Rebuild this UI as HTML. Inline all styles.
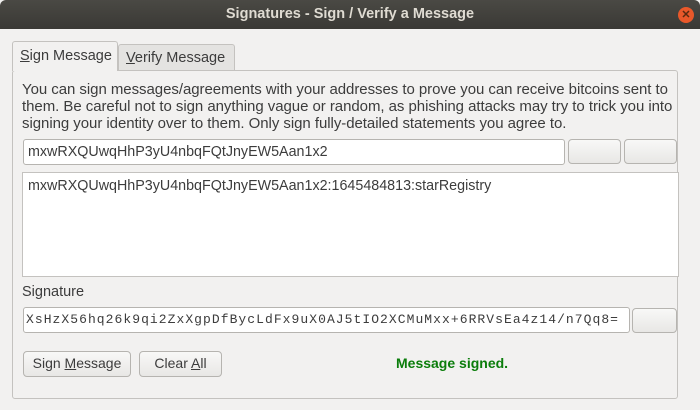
<!DOCTYPE html>
<html><head><style>
*{margin:0;padding:0;box-sizing:border-box}
body{width:700px;height:410px;background:#f2f1f0;font-family:"Liberation Sans",sans-serif;font-size:13.5px;color:#3c3c3c;position:relative;overflow:hidden}
.a{position:absolute}
.title{left:0;top:0;width:700px;height:29px;background:linear-gradient(#4a4944,#3a3935);color:#dfdbd2;font-weight:bold;font-size:14.5px;text-align:center;line-height:29px;border-radius:6px 6px 0 0}
.close{left:678px;top:7px;width:16px;height:16px;border-radius:50%;background:#e9582a;color:#5a2a10;font-size:11px;line-height:16px;text-align:center;font-weight:bold}
.pane{left:12px;top:70px;width:666px;height:329px;border:1px solid #c4c2bf;border-radius:3px;background:#f2f1f0}
.tab{height:29px;border:1px solid #c4c2bf;border-bottom:none;border-radius:3px 3px 0 0;line-height:28px;padding-left:7px;font-size:14px}
.inp{background:#fff;border:1px solid #b6b4b0;border-radius:3px}
.btn{border:1px solid #b6b4b0;border-radius:4px;background:linear-gradient(#f8f8f7,#e8e7e5);text-align:center;line-height:23px;font-size:14px}
u{text-decoration:underline}
.mono{font-family:"Liberation Mono",monospace;font-size:13px;letter-spacing:1.05px}
</style></head><body>
<div class="a title">Signatures - Sign / Verify a Message</div>
<div class="a close">✕</div>
<div class="a pane"></div>
<div class="a tab" style="left:118px;top:44px;width:117px;height:26px;background:#e4e3e1;line-height:26px;font-size:14.5px"><u>V</u>erify Message</div>
<div class="a tab" style="left:12px;top:41px;width:106px;height:30px;background:#f2f1f0;font-size:14.5px"><u>S</u>ign Message</div>
<div class="a" style="left:22px;top:81px;width:670px;line-height:17px;font-size:15px;letter-spacing:-0.05px;white-space:nowrap">You can sign messages/agreements with your addresses to prove you can receive bitcoins sent to<br>them. Be careful not to sign anything vague or random, as phishing attacks may try to trick you into<br>signing your identity over to them. Only sign fully-detailed statements you agree to.</div>
<div class="a inp" style="left:23px;top:139px;width:542px;height:26px;padding-left:4px;line-height:24px;font-size:14.3px">mxwRXQUwqHhP3yU4nbqFQtJnyEW5Aan1x2</div>
<div class="a btn" style="left:568px;top:139px;width:53px;height:25px"></div>
<div class="a btn" style="left:624px;top:139px;width:53px;height:25px"></div>
<div class="a inp" style="left:22px;top:172px;width:657px;height:105px;border-color:#c4c2bf;border-radius:0;padding:5px 5px;font-size:14.3px">mxwRXQUwqHhP3yU4nbqFQtJnyEW5Aan1x2:1645484813:starRegistry</div>
<div class="a" style="left:22px;top:284px;font-size:14.5px">Signature</div>
<div class="a inp mono" style="left:23px;top:307px;width:607px;height:26px;padding-left:2px;line-height:24px;white-space:nowrap;overflow:hidden">XsHzX56hq26k9qi2ZxXgpDfBycLdFx9uX0AJ5tIO2XCMuMxx+6RRVsEa4z14/n7Qq8=</div>
<div class="a btn" style="left:632px;top:308px;width:45px;height:25px"></div>
<div class="a btn" style="left:23px;top:351px;width:108px;height:26px">Sign <u>M</u>essage</div>
<div class="a btn" style="left:139px;top:351px;width:83px;height:26px">Clear <u>A</u>ll</div>
<div class="a" style="left:396px;top:355px;color:#0b7d0b;font-weight:bold;font-size:14px">Message signed.</div>
</body></html>
